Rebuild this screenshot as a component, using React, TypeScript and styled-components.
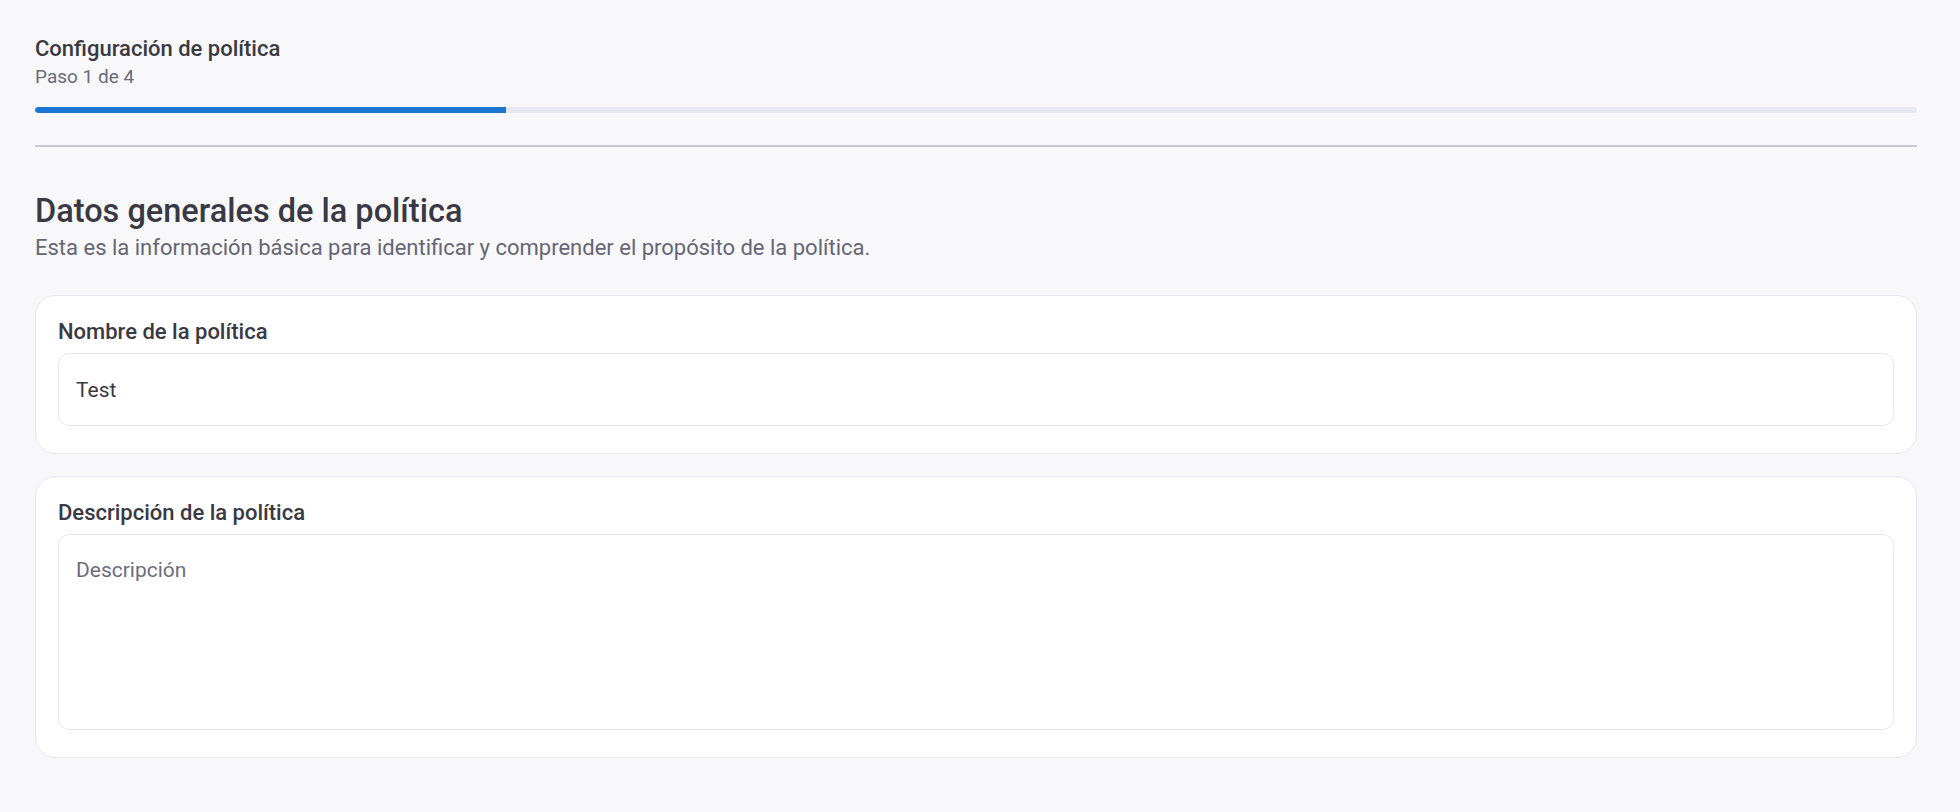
import styled, { createGlobalStyle } from "styled-components";

const GlobalStyle = createGlobalStyle`
  html, body {
    margin: 0;
    padding: 0;
    background-color: #f8f8fa;
    font-family: Roboto, "Liberation Sans", sans-serif;
    color: #393944;
  }
  * {
    box-sizing: border-box;
  }
`;

const Page = styled.div`
  padding: 35px 43px 35px 35px;
  display: flex;
  flex-direction: column;
`;

const StepHeader = styled.header`
  display: flex;
  flex-direction: column;
`;

const StepTitle = styled.h1`
  margin: 0;
  font-size: 22px;
  line-height: 28px;
  font-weight: 500;
  color: #393944;
`;

const StepCount = styled.span`
  font-size: 19px;
  line-height: 28px;
  color: #6a6a7a;
`;

const ProgressTrack = styled.div`
  margin-top: 16px;
  height: 6px;
  border-radius: 3px;
  background-color: #e7e7f1;
  overflow: hidden;
`;

const ProgressFill = styled.div`
  height: 100%;
  background-color: #1976d2;
  border-radius: 3px 0 0 3px;
`;

const Divider = styled.hr`
  margin: 32px 0 0;
  border: none;
  border-top: 2px solid #c9c9d1;
`;

const Section = styled.section`
  margin-top: 45px;
  display: flex;
  flex-direction: column;
`;

const SectionTitle = styled.h2`
  margin: 0;
  font-size: 32.5px;
  line-height: 38px;
  font-weight: 500;
  color: #393944;
`;

const SectionText = styled.p`
  margin: 3px 0 0;
  font-size: 22px;
  line-height: 30px;
  color: #656576;
`;

const Cards = styled.div`
  margin-top: 32px;
  display: flex;
  flex-direction: column;
  gap: 22px;
`;

const Card = styled.div`
  background-color: #fff;
  border: 1px solid #e8e6f0;
  border-radius: 20px;
  padding: 21px 22px 27px;
  display: flex;
  flex-direction: column;
  gap: 7px;
`;

const Label = styled.label`
  font-size: 22px;
  line-height: 29px;
  font-weight: 500;
  color: #393944;
`;

const fieldStyles = `
  width: 100%;
  border: 1px solid #e8e6f0;
  border-radius: 11px;
  background-color: #fff;
  padding: 21px 17px;
  font-family: Roboto, "Liberation Sans", sans-serif;
  font-size: 21px;
  line-height: 29px;
  color: #393944;
  outline: none;
  &::placeholder {
    color: #6c6c7e;
  }
`;

const TextInput = styled.input`
  ${fieldStyles}
  height: 73px;
`;

const TextArea = styled.textarea<{ $height: number }>`
  ${fieldStyles}
  display: block;
  height: ${(p) => p.$height}px;
  resize: none;
`;

export default function App() {
  const step = 1;
  const total = 4;

  return (
    <>
      <GlobalStyle />
      <Page>
        <StepHeader>
          <StepTitle>Configuración de política</StepTitle>
          <StepCount>
            Paso {step} de {total}
          </StepCount>
        </StepHeader>
        <ProgressTrack>
          <ProgressFill style={{ width: `${(step / total) * 100}%` }} />
        </ProgressTrack>
        <Divider />
        <Section>
          <SectionTitle>Datos generales de la política</SectionTitle>
          <SectionText>
            Esta es la información básica para identificar y comprender el
            propósito de la política.
          </SectionText>
          <Cards>
            <Card>
              <Label htmlFor="policy-name">Nombre de la política</Label>
              <TextInput id="policy-name" defaultValue="Test" />
            </Card>
            <Card>
              <Label htmlFor="policy-desc">Descripción de la política</Label>
              <TextArea
                id="policy-desc"
                placeholder="Descripción"
                $height={196}
              />
            </Card>
          </Cards>
        </Section>
      </Page>
    </>
  );
}
